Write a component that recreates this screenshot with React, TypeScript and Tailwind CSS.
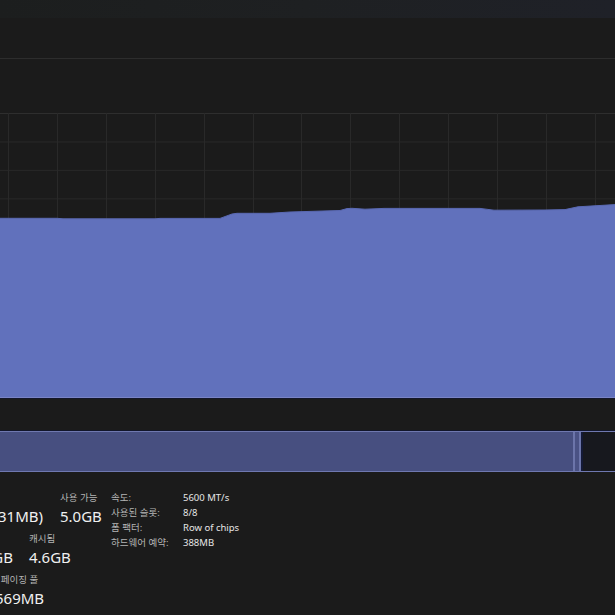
import React from "react";

const W = 615;
const GH = 286;
const pts: [number, number][] = [
  [0, 218.3], [57, 218.3], [63, 218.8], [155, 218.8], [160, 218.4], [220, 218.4],
  [232, 214], [237, 213.3], [270, 213.3], [290, 212], [340, 210.5], [347, 208.6],
  [352, 208.3], [365, 209.2], [384, 208.4], [480, 208.4], [494, 210.2], [545, 210],
  [565, 209.6], [578, 206.8], [615, 204.6],
];

function Graph() {
  const top = 113;
  const poly =
    pts.map(([x, y]) => `${x},${(y - top).toFixed(1)}`).join(" ") +
    ` ${W},${GH - 1.5} 0,${GH - 1.5}`;
  const vx: number[] = [];
  for (let k = 0; k < 13; k++) vx.push(8 + 48.9 * k);
  const hy: number[] = [];
  for (let k = 0; k < 10; k++) hy.push(0.5 + 28.45 * k);
  return (
    <svg width={W} height={GH} className="block shrink-0">
      <rect x={0} y={0} width={W} height={GH} fill="#1b1b1b" />
      {hy.map((y, i) => (
        <line key={"h" + i} x1={0} x2={W} y1={y} y2={y} stroke={i === 0 ? "#2e2e2e" : "#292929"} strokeWidth={1} />
      ))}
      {vx.map((x, i) => (
        <line key={"v" + i} x1={Math.round(x) + 0.5} x2={Math.round(x) + 0.5} y1={0} y2={GH} stroke="#292929" strokeWidth={1} />
      ))}
      <polygon points={poly} fill="#6171bc" />
      <polyline
        points={pts.map(([x, y]) => `${x},${(y - top).toFixed(1)}`).join(" ")}
        fill="none"
        stroke="#5a69b3"
        strokeWidth={1}
      />
      <line x1={0} x2={W} y1={GH - 1.5} y2={GH - 1.5} stroke="#7a84c6" strokeWidth={1} />
      <line x1={0} x2={W} y1={GH - 0.5} y2={GH - 0.5} stroke="#13172a" strokeWidth={1} />
    </svg>
  );
}

const font = { fontFamily: '"Noto Sans", "Noto Sans CJK KR", sans-serif' };

function Label({ children }: { children: React.ReactNode }) {
  return <div className="h-[13px] leading-[13px] text-[9.5px] text-[#b4b4b4] whitespace-nowrap">{children}</div>;
}
function Value({ children }: { children: React.ReactNode }) {
  return <div className="h-[25px] leading-[25px] text-[15px] text-[#f0f0f0] whitespace-nowrap">{children}</div>;
}

export default function App() {
  return (
    <div className="w-[615px] h-[615px] bg-[#1b1b1b] overflow-hidden flex flex-col" style={font}>
      <div className="h-[18px] shrink-0 bg-gradient-to-r from-[#1c1e1e] via-[#1e2022] to-[#1f2128]" />
      <div className="h-[40px] shrink-0" />
      <div className="h-px shrink-0 bg-[#2d2d2d]" />
      <div className="h-[54px] shrink-0" />
      <Graph />
      <div className="h-[32px] shrink-0 border-b border-[#12162a]" />
      <div className="h-[41px] shrink-0 flex border-y border-[#6f78b0]">
        <div className="w-[573px] bg-[#474f80]" />
        <div className="w-[8px] bg-[#4a5284] border-x-2 border-[#6c75aa]" />
        <div className="flex-1 bg-[#17181e] border-l-2 border-[#141936]" />
      </div>
      <div className="flex-1 flex overflow-hidden">
        <div className="w-[111px] shrink-0 flex flex-col pt-[19px] overflow-hidden">
          <div className="flex h-[41px]">
            <div className="w-[43px] shrink-0 flex justify-end">
              <div className="shrink-0">
                <Label>{"\u00a0"}</Label>
                <Value>7.3GB (431MB)</Value>
              </div>
            </div>
            <div className="ml-[17px] shrink-0">
              <Label>사용 가능</Label>
              <Value>5.0GB</Value>
            </div>
          </div>
          <div className="flex h-[41px]">
            <div className="w-[13px] shrink-0 flex justify-end">
              <div className="shrink-0">
                <Label>{"\u00a0"}</Label>
                <Value>14.2/33.1GB</Value>
              </div>
            </div>
            <div className="ml-[16px] shrink-0">
              <Label>캐시됨</Label>
              <Value>4.6GB</Value>
            </div>
          </div>
          <div className="flex h-[41px]">
            <div className="ml-[-8px] shrink-0">
              <Label>비페이징 풀</Label>
              <div className="ml-[3px]">
                <Value>569MB</Value>
              </div>
            </div>
          </div>
        </div>
        <div className="pt-[18px] flex text-[9.5px] leading-[15px]">
          <div className="w-[72px] text-[#b4b4b4] whitespace-nowrap">
            <div>속도:</div>
            <div>사용된 슬롯:</div>
            <div>폼 팩터:</div>
            <div>하드웨어 예약:</div>
          </div>
          <div className="text-[#e6e6e6] whitespace-nowrap">
            <div>5600 MT/s</div>
            <div>8/8</div>
            <div>Row of chips</div>
            <div>388MB</div>
          </div>
        </div>
      </div>
    </div>
  );
}
